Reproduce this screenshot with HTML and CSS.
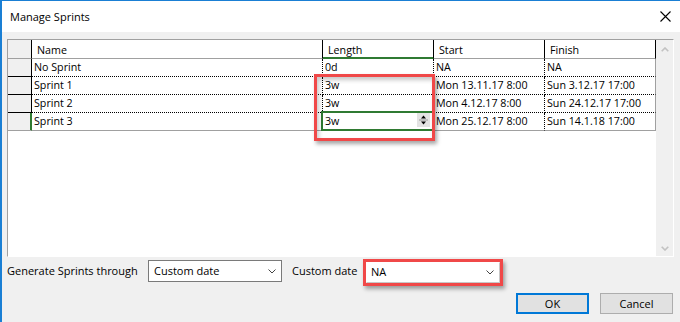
FILE: index.html
```html
<!DOCTYPE html>
<html>
<head>
<meta charset="utf-8">
<title>Manage Sprints</title>
<link rel="stylesheet" href="styles.css">
</head>
<body>
<div class="window">
  <div class="titlebar">
    <span class="title">Manage Sprints</span>
    <svg class="close" width="11" height="11" viewBox="0 0 11 11"><path d="M0.5 0.5 L10.5 10.5 M10.5 0.5 L0.5 10.5" stroke="#000" stroke-width="1.1" fill="none"/></svg>
  </div>
  <div class="content">
    <div class="gridbox">
      <div class="sheet">
        <div class="c h rh"></div>
        <div class="c h">Name</div>
        <div class="c h selcol">Length</div>
        <div class="c h">Start</div>
        <div class="c h">Finish</div>

        <div class="c rh"></div>
        <div class="c">No Sprint</div>
        <div class="c">0d</div>
        <div class="c">NA</div>
        <div class="c lastcol">NA</div>

        <div class="c rh"></div>
        <div class="c">Sprint 1</div>
        <div class="c">3w</div>
        <div class="c">Mon 13.11.17 8:00</div>
        <div class="c lastcol">Sun 3.12.17 17:00</div>

        <div class="c rh"></div>
        <div class="c">Sprint 2</div>
        <div class="c">3w</div>
        <div class="c">Mon 4.12.17 8:00</div>
        <div class="c lastcol">Sun 24.12.17 17:00</div>

        <div class="c rh selrow lastrow"></div>
        <div class="c lastrow">Sprint 3</div>
        <div class="c lastrow edit">3w
          <svg class="spin" width="13" height="14" viewBox="0 0 13 14"><rect x="0" y="0" width="13" height="14" fill="#e3e3e3"/><path d="M6.5 2.5 L9 5.5 L4 5.5 Z" fill="#000"/><path d="M2 7 H11" stroke="#9a9a9a" stroke-width="1"/><path d="M4 8.5 L9 8.5 L6.5 11.5 Z" fill="#000"/></svg>
        </div>
        <div class="c lastrow">Mon 25.12.17 8:00</div>
        <div class="c lastrow lastcol">Sun 14.1.18 17:00</div>
      </div>
      <div class="scroll">
        <svg width="8" height="5" viewBox="0 0 8 5"><path d="M0.7 4.3 L4 1 L7.3 4.3" stroke="#c2c2c2" stroke-width="1.6" fill="none"/></svg>
        <svg width="8" height="5" viewBox="0 0 8 5"><path d="M0.7 0.7 L4 4 L7.3 0.7" stroke="#c2c2c2" stroke-width="1.6" fill="none"/></svg>
      </div>
      <div class="annot"></div>
    </div>

    <div class="options">
      <span class="lbl lbl1">Generate Sprints through</span>
      <div class="combo">
        <span>Custom date</span>
        <svg width="8" height="5" viewBox="0 0 8 5"><path d="M0.5 0.5 L4 4 L7.5 0.5" stroke="#444" stroke-width="1" fill="none"/></svg>
      </div>
      <span class="lbl lbl2">Custom date</span>
      <div class="hl">
        <div class="combo inner">
          <span>NA</span>
          <svg width="8" height="5" viewBox="0 0 8 5"><path d="M0.5 0.5 L4 4 L7.5 0.5" stroke="#444" stroke-width="1" fill="none"/></svg>
        </div>
      </div>
    </div>

    <div class="buttons">
      <button class="btn default">OK</button>
      <button class="btn">Cancel</button>
    </div>
  </div>
</div>
</body>
</html>
```
FILE: styles.css
```css
* { box-sizing: border-box; }
html, body { margin: 0; padding: 0; }
body {
  width: 680px;
  height: 322px;
  overflow: hidden;
  background: #f0f0f0;
  font-family: "Open Sans", "Noto Sans", sans-serif;
  font-size: 11px;
  color: #000;
}
.window {
  height: 322px;
  border-left: 2px solid #1a7fd4;
  border-top: 1px solid #1a7fd4;
  background: #f0f0f0;
}
.titlebar {
  height: 31px;
  background: #fff;
  display: flex;
  align-items: center;
  justify-content: space-between;
  padding: 0 9px 0 8px;
}
.title { font-size: 11px; line-height: 14px; }
.close { display: block; }

.content { padding: 7px 7px 0 5px; }

.gridbox {
  position: relative;
  display: flex;
  width: 667px;
  height: 218px;
  border-top: 1px solid #a0a0a0;
  border-left: 1px solid #a0a0a0;
  border-right: 1px solid #fff;
  border-bottom: 1px solid #fff;
  background: #fff;
}
.sheet {
  display: grid;
  grid-template-columns: 24px 291px 111px 111px 111px;
  grid-template-rows: 19px repeat(4, 18px);
  align-content: start;
  font-size: 10.7px;
}
.c {
  position: relative;
  display: flex;
  align-items: center;
  padding-left: 2px;
  white-space: nowrap;
  border-right: 1px dotted #000;
  border-bottom: 1px dotted #000;
  line-height: 1;
}
.c.h {
  padding-left: 5px;
  padding-top: 3px;
  border-right: 1px solid #000;
  border-bottom: 1px solid #a0a0a0;
}
.c.rh {
  background: #f0f0f0;
  border-right: 1px solid #000;
  border-bottom: 1px solid #000;
}
.c.h.rh { border-bottom-color: #a0a0a0; }
.c.selcol {
  border-bottom-color: #2f7a32;
  box-shadow: inset 0 -1px 0 #2f7a32;
}
.c.selrow {
  border-right-color: #2f7a32;
  box-shadow: inset -1px 0 0 #2f7a32;
}
.c.lastcol { border-right: 1px solid #a0a0a0; }
.c.lastrow { border-bottom: 1px solid #a0a0a0; }
.c.edit::after {
  content: "";
  position: absolute;
  top: -2px;
  left: -2px;
  right: -1px;
  bottom: -1px;
  border: 2px solid #2f7a32;
}
.spin {
  position: absolute;
  right: 3px;
  top: 0;
}

.scroll {
  width: 17px;
  background: #f0f0f0;
  display: flex;
  flex-direction: column;
  justify-content: space-between;
  align-items: center;
  padding: 7px 0 5px 1px;
}
.scroll svg { display: block; }

.annot {
  position: absolute;
  left: 306px;
  top: 34px;
  width: 121px;
  height: 67px;
  border: 3px solid #f04848;
  box-shadow: 2px 3px 4px rgba(0,0,0,0.35), inset 2px 3px 4px rgba(0,0,0,0.22);
  pointer-events: none;
}

.options {
  display: flex;
  align-items: flex-start;
  height: 27px;
  margin-top: 2px;
}
.lbl { line-height: 22px; margin-top: 1px; white-space: nowrap; }
.lbl1 { width: 141px; }
.lbl2 { width: 71px; margin-left: 10px; }
.combo {
  width: 134px;
  height: 22px;
  margin-top: 1px;
  border: 1px solid #7a7a7a;
  background: #fff;
  display: flex;
  align-items: center;
  justify-content: space-between;
  padding: 0 5px 2px 5px;
}
.combo svg { display: block; margin-top: 2px; }
.hl {
  width: 140px;
  height: 27px;
  border: 3px solid #f04848;
  box-shadow: 2px 3px 4px rgba(0,0,0,0.35), inset 2px 3px 4px rgba(0,0,0,0.18);
}
.combo.inner {
  width: 100%;
  height: 100%;
  margin: 0;
  border: 1px solid #c8c8c8;
  border-top-color: transparent;
  border-left-color: transparent;
  padding: 0 5px 2px 4px;
}

.buttons {
  display: flex;
  justify-content: flex-end;
  gap: 11px;
  margin-top: 7px;
}
.btn {
  width: 73px;
  height: 21px;
  padding: 0 0 1px 0;
  margin: 0;
  background: #e1e1e1;
  border: 1px solid #adadad;
  font-family: inherit;
  font-size: 11px;
  color: #000;
  line-height: 1;
  display: flex;
  align-items: center;
  justify-content: center;
}
.btn.default { border: 2px solid #0078d7; }
```
